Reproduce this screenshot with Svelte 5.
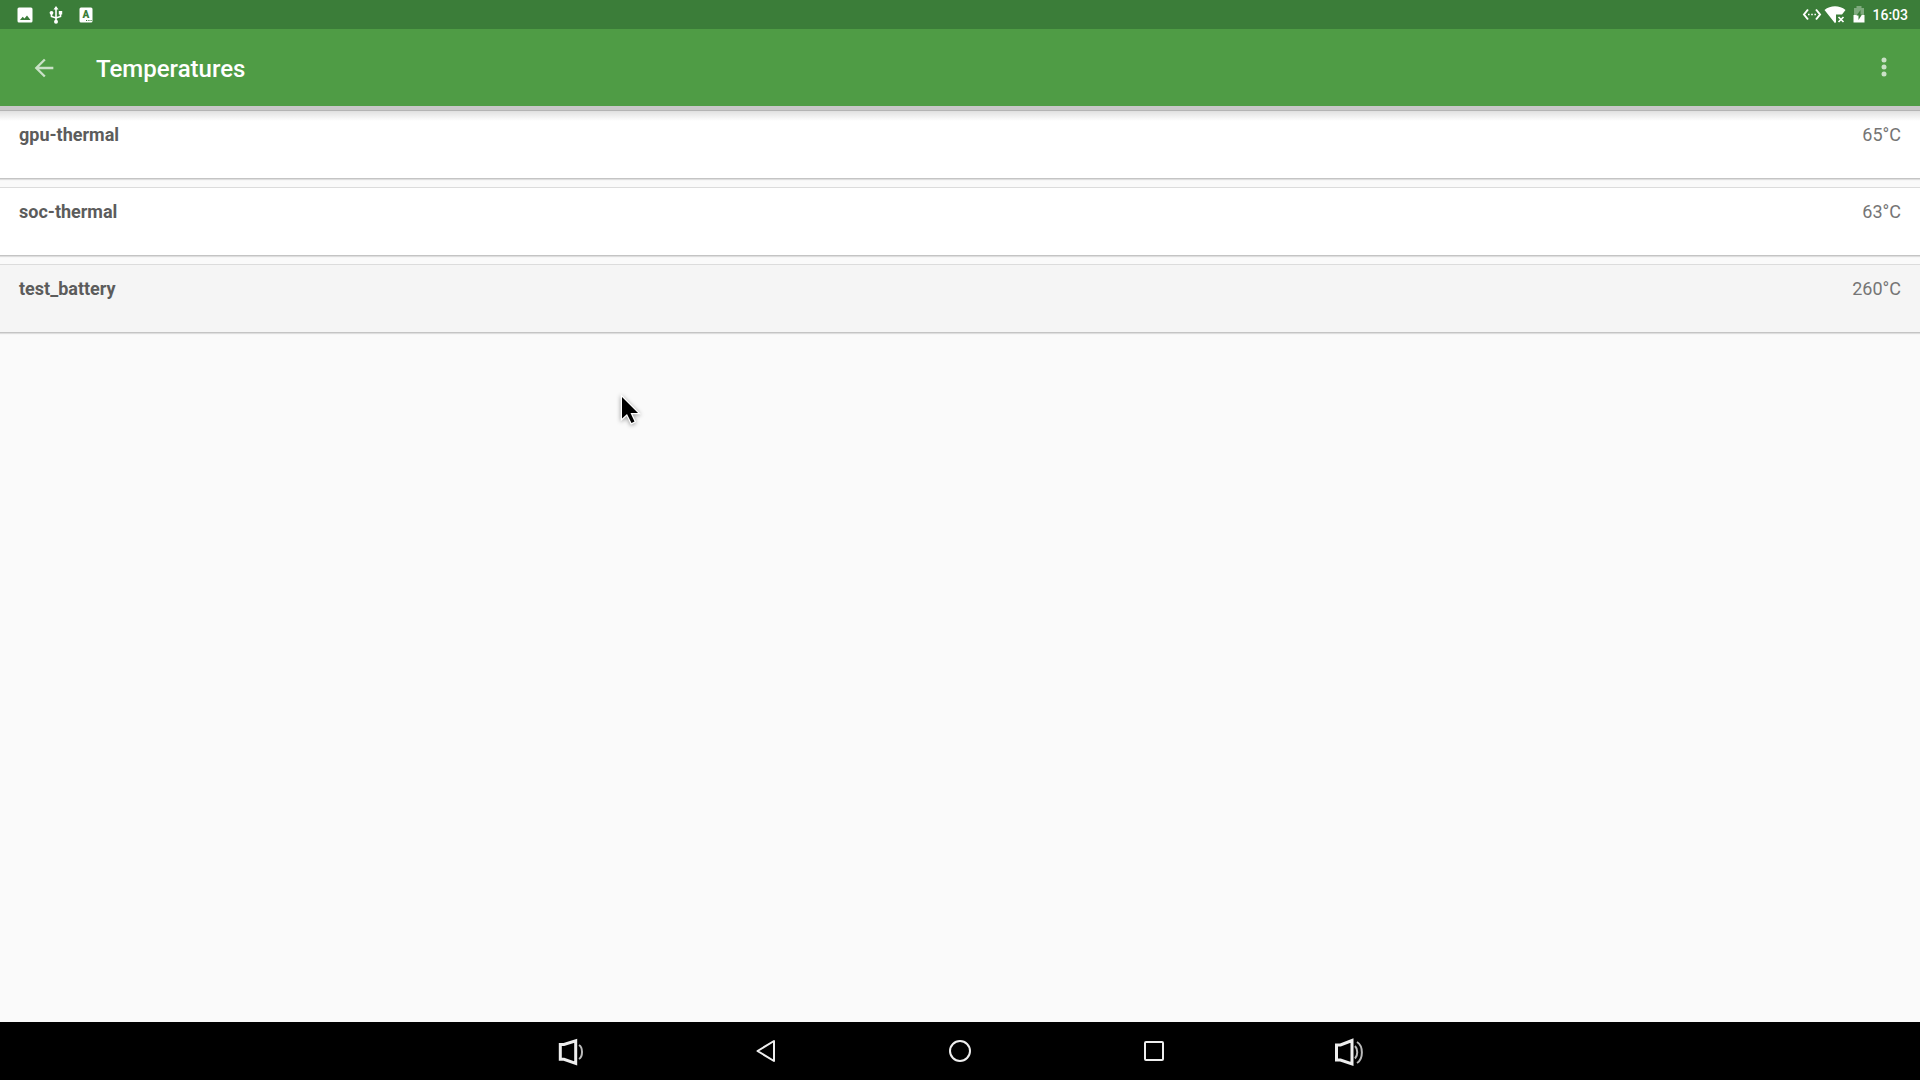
<script lang="ts">
  type Sensor = { name: string; value: number };

  const sensors: Sensor[] = [
    { name: 'gpu-thermal', value: 65 },
    { name: 'soc-thermal', value: 63 },
    { name: 'test_battery', value: 260 },
  ];

  let selected = $state('test_battery');
</script>

<svelte:head>
  <title>Temperatures</title>
</svelte:head>

<div class="screen">
  <div class="status-bar">
    <div class="notifications">
      <svg width="16" height="18" viewBox="0 0 16 18">
        <path fill="#fff" fill-rule="evenodd" d="M2 1.500h12a1.500 1.500 0 0 1 1.500 1.500v12a1.500 1.500 0 0 1-1.500 1.500H2A1.500 1.500 0 0 1 .5 15V3A1.500 1.500 0 0 1 2 1.500zM3 14h10.500l-3.500-4.500-2.500 3-1.800-1.800z" />
      </svg>
      <svg width="14" height="18" viewBox="0 0 14 18">
        <path fill="none" stroke="#fff" stroke-width="1.600" d="M7 3v13M2.500 7v3.500L7 12l4.500-1.500V7" />
        <path fill="#fff" d="M7 0l2.500 3.500h-5zM9.800 5h3.400v3.400H9.800z" />
        <circle cx="2.500" cy="6.800" r="1.900" fill="#fff" />
        <circle cx="7" cy="15.800" r="2" fill="#fff" />
      </svg>
      <svg width="14" height="18" viewBox="0 0 14 18">
        <rect x=".5" y="1.500" width="13" height="15" rx="1.500" fill="#fff" />
        <text x="7" y="12" text-anchor="middle" font-size="10" font-weight="900" fill="#3b7d39">A</text>
        <path stroke="#3b7d39" stroke-width="1" d="M7 14.500h1.200M9.300 14.500h1.200M11.500 14.500h1.200" />
      </svg>
    </div>
    <div class="system">
      <svg width="20" height="18" viewBox="0 0 20 18">
        <path fill="none" stroke="#fff" stroke-width="2" d="M6 3.500L2 8.500l4 5M14 3.500l4 5-4 5" />
        <path stroke="#fff" stroke-width="1.500" d="M6 8.500h1.600M9.200 8.500h1.600M12.400 8.500H14" />
      </svg>
      <svg width="22" height="18" viewBox="0 0 22 18">
        <path fill="#fff" d="M.5 4C6.500-1 15.500-1 21.500 4L18 8.500h-6v7.500l-1 1.200z" />
        <path stroke="#fff" stroke-width="1.700" d="M14.500 11l5 5M19.500 11l-5 5" />
      </svg>
      <svg class="battery" width="12" height="18" viewBox="0 0 12 18">
        <path fill="#fff" fill-opacity=".35" d="M3.500 0h5v2H11v7H1V2h2.500z" />
        <path fill="#fff" d="M.5 9h11v7.500H.5z" />
        <path fill="#3b7d39" d="M7.500 4L3.500 9.500h2V14L9 8.500H7.500z" />
      </svg>
      <span class="clock">16:03</span>
    </div>
  </div>

  <header class="app-bar">
    <button class="icon-btn" aria-label="Back">
      <svg width="28" height="28" viewBox="0 0 24 24">
        <path fill="currentColor" d="M20 11H7.830l5.590-5.590L12 4l-8 8 8 8 1.410-1.410L7.830 13H20v-2z" />
      </svg>
    </button>
    <h1>Temperatures</h1>
    <button class="icon-btn" aria-label="More options">
      <svg width="28" height="28" viewBox="0 0 28 28">
        <g fill="currentColor">
          <circle cx="14" cy="6" r="2.500" />
          <circle cx="14" cy="13" r="2.500" />
          <circle cx="14" cy="20" r="2.500" />
        </g>
      </svg>
    </button>
  </header>

  <main>
    <ul class="list">
      {#each sensors as sensor (sensor.name)}
        <li>
          <button class="card" class:selected={selected === sensor.name} onclick={() => (selected = sensor.name)}>
            <span class="name">{sensor.name}</span>
            <span class="value">{sensor.value}°C</span>
          </button>
        </li>
      {/each}
    </ul>
  </main>

  <nav class="nav-bar">
    <button aria-label="Volume down">
      <svg width="32" height="32" viewBox="0 0 32 32">
        <path class="thick" d="M4.300 9.500H8l11.700-3.800v22.600L8 24.300H4.300z" />
        <path class="thin" d="M23 10c4 2.500 4 11.500 0 14" />
      </svg>
    </button>
    <button aria-label="Back">
      <svg width="32" height="32" viewBox="0 0 32 32">
        <path stroke-linejoin="round" d="M24 6v20L7.500 16z" />
      </svg>
    </button>
    <button aria-label="Home">
      <svg width="32" height="32" viewBox="0 0 32 32">
        <circle cx="16" cy="16" r="10" />
      </svg>
    </button>
    <button aria-label="Recent apps">
      <svg width="32" height="32" viewBox="0 0 32 32">
        <rect x="7" y="7" width="18" height="18" rx="1" />
      </svg>
    </button>
    <button aria-label="Volume up">
      <svg width="32" height="32" viewBox="0 0 32 32">
        <path class="thick" d="M4.500 10h4l11.500-4.500v23.500L8.500 25h-4z" />
        <path class="thin" d="M23 11c3 3 3 9.500 0 12.500M25 7c6.500 4 6.500 17 0 21" />
      </svg>
    </button>
  </nav>

  <svg class="pointer" width="28" height="36" viewBox="0 0 28 36">
    <path stroke="#fff" stroke-width="2.500" paint-order="stroke" d="M4 3v21.500l5-4.500 4.500 9 3-1.500-4-8.500h7.500z" />
  </svg>
</div>

<style>
  :global(body) {
    margin: 0;
    background: #fafafa;
  }

  .screen {
    position: relative;
    display: flex;
    flex-direction: column;
    min-height: 100vh;
    font-family: Roboto, sans-serif;
    background: #fafafa;
  }

  button {
    margin: 0;
    padding: 0;
    border: none;
    background: none;
    font-family: inherit;
    cursor: pointer;
  }

  svg {
    display: block;
  }

  /* Status bar */
  .status-bar {
    display: flex;
    justify-content: space-between;
    align-items: center;
    height: 29px;
    padding: 0 12px 0 17px;
    background: #3b7d39;
    color: #fff;
  }

  .notifications {
    display: flex;
    gap: 16px;
  }

  .system {
    display: flex;
    align-items: center;
    gap: 2px;
  }

  .battery {
    margin: 0 5px;
  }

  .clock {
    font-size: 14px;
    font-weight: 500;
    line-height: 18px;
  }

  /* App bar */
  .app-bar {
    display: flex;
    align-items: center;
    height: 77px;
    padding: 0 22px 0 30px;
    background: #4f9c45;
  }

  .icon-btn {
    color: rgba(255, 255, 255, 0.7);
  }

  h1 {
    flex: 1;
    margin: 0;
    padding: 2px 0 0 38px;
    color: #fff;
    font-size: 24px;
    font-weight: 500;
    line-height: 32px;
  }

  /* Sensor list */
  main {
    flex: 1;
    border-top: 4px solid #c8c8c8;
  }

  .list {
    display: flex;
    flex-direction: column;
    gap: 9px;
    margin: 0;
    padding: 0;
    list-style: none;
  }

  .card {
    display: flex;
    justify-content: space-between;
    align-items: flex-start;
    box-sizing: border-box;
    width: 100%;
    height: 68px;
    padding: 12px 19px;
    border-top: 1px solid #dcdcdc;
    background: #fff;
    box-shadow: 0 1px 0 #c4c4c4, 0 2px 1px #dedede;
    font-size: 18px;
    line-height: 24px;
  }

  .card.selected {
    background: #f5f5f5;
  }

  /* the app bar casts its shadow on the first card */
  li:first-child .card {
    border-top-color: #b4b4b4;
    background-image: linear-gradient(rgba(0, 0, 0, 0.12), transparent 10px);
  }

  .name {
    color: #5c5c5c;
    font-weight: 700;
  }

  .value {
    color: #757575;
  }

  /* Navigation bar */
  .nav-bar {
    display: flex;
    justify-content: center;
    align-items: center;
    gap: 162px;
    height: 58px;
    background: #000;
  }

  .nav-bar svg {
    fill: none;
    stroke: #eee;
    stroke-width: 2;
  }

  .nav-bar .thick {
    stroke-width: 3;
  }

  .nav-bar .thin {
    stroke: #bbb;
  }

  .pointer {
    position: absolute;
    top: 394px;
    left: 618px;
    filter: drop-shadow(0 1px 2px rgba(0, 0, 0, 0.4));
    pointer-events: none;
  }
</style>
